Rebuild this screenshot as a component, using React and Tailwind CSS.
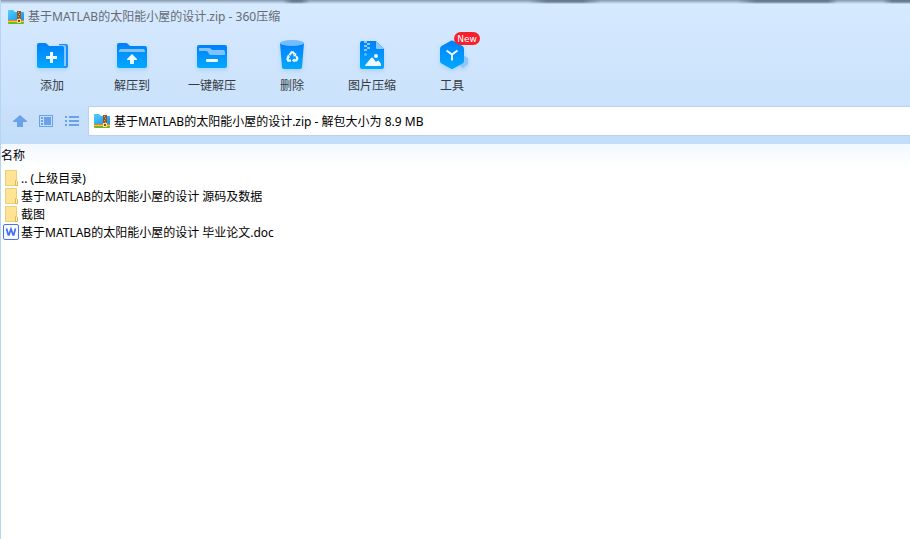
import React from "react";

function ArchiveIcon() {
  return (
    <svg width="16" height="14" viewBox="0 0 16 14" className="shrink-0" aria-hidden="true">
      <path d="M0 1q0-1 1-1h4l2 2h8q1 0 1 1v8H0z" fill="url(#folderBlue)" />
      <path d="M0 10h16v1H0z" fill="#f47a23" />
      <path d="M0 11h16v1H0z" fill="#ffc533" />
      <path d="M0 12h16v1q0 1-1 1H1q-1 0-1-1z" fill="#69b82d" />
      <path d="M9 1h4v12H9z" fill="#9a5420" />
      <path d="M10 2h1v1h-1zM11 4h1v1h-1zM10 6h1v1h-1zM11 8h1v1h-1z" fill="#e0a860" />
      <path d="M9 9h4v4H9z" fill="#ffe28a" />
      <path d="M10 10h2v2h-2z" fill="#8b4a1c" />
    </svg>
  );
}

function Defs() {
  return (
    <svg width="0" height="0" className="absolute" aria-hidden="true">
      <defs>
        <linearGradient id="blue" x1="0" y1="0" x2="0" y2="1">
          <stop offset="0" stopColor="#0080fb" />
          <stop offset="1" stopColor="#00a9ff" />
        </linearGradient>
        <linearGradient id="folderBlue" x1="0" y1="0" x2="1" y2="1">
          <stop offset="0" stopColor="#4fd0fb" />
          <stop offset="1" stopColor="#1791ea" />
        </linearGradient>
      </defs>
    </svg>
  );
}

function ToolIcon({ children }) {
  return (
    <svg width="34" height="34" viewBox="0 0 34 34" className="drop-shadow-[0_2px_2px_rgba(40,130,230,0.2)]" aria-hidden="true">
      {children}
    </svg>
  );
}

const addIcon = (
  <ToolIcon>
    <path d="M24 5h7q2 0 2 2v20q0 2-2 2h-7z" fill="#168fff" />
    <path d="M24 6h5q2 0 2 2v19h-2V9q0-1-1-1h-4z" fill="#8bc7ff" />
    <path d="M2 6q0-2 2-2h6q1 0 2 1l2 2h13q2 0 2 2v20H4q-2 0-2-2z" fill="url(#blue)" />
    <path d="M15 13h3v4h4v3h-4v4h-3v-4h-4v-3h4z" fill="#eef8ff" />
  </ToolIcon>
);

const extractIcon = (
  <ToolIcon>
    <path d="M2 6q0-2 2-2h7q1 0 2 1l2 2h15q2 0 2 2v18q0 2-2 2H4q-2 0-2-2z" fill="url(#blue)" />
    <path d="M4 12q0-2 2-2h22q2 0 2 2v1H4z" fill="#82c2ff" />
    <path d="M17 15l5 5v1h-3v4h-4v-4h-3v-1z" fill="#eef8ff" />
  </ToolIcon>
);

const quickIcon = (
  <ToolIcon>
    <rect x="2" y="6" width="30" height="23" rx="2" fill="url(#blue)" />
    <path d="M4 9h10q1 0 2 1l1 1h11q2 0 2 2v3H16q-1 0-2-1l-1-2q-1-1-2-1H4z" fill="#82c2ff" />
    <rect x="11" y="20" width="12" height="3" rx="1" fill="#f3faff" />
  </ToolIcon>
);

const deleteIcon = (
  <ToolIcon>
    <path d="M5 4h24l-2 24q0 2-3 2H10q-3 0-3-2z" fill="url(#blue)" />
    <ellipse cx="17" cy="4" rx="12" ry="3" fill="#74bcff" />
    <g transform="translate(17 18) scale(.78) translate(-16.6 -18.5)">
      <g fill="none" stroke="#eef8ff" strokeWidth="2.8">
        <path d="M13.4 16l2.6-3.600h2l1.800 2.600M22.100 17.400l1.400 3-1.200 2.400h-4M15.300 23.100h-3.600l-1-2.200 1.600-3" />
      </g>
      <path d="M22 13v4.500h-4.500zM19.700 20v5.500L16.400 22.700zM9.400 17.600l3.200-2 1.700 3.800z" fill="#eef8ff" />
    </g>
  </ToolIcon>
);

const imageIcon = (
  <ToolIcon>
    <path d="M5 4q0-2 2-2h14l8 8v18q0 2-2 2H7q-2 0-2-2z" fill="url(#blue)" />
    <path d="M21 2l8 8h-7q-1 0-1-1z" fill="#8bc7ff" />
    <path d="M9 2h3v2h3v2h-3v2h3v2h-3v2H9v-2h3V8H9V6h3V4H9z" fill="#8bcaff" />
    <circle cx="10.5" cy="15.5" r="1.5" fill="#65b7ff" />
    <circle cx="21" cy="17" r="2" fill="#eef8ff" />
    <path d="M10 27q0-1 1-2l5-6q1-1 2 0l3 4 1-1q1-1 2 0l2 3v2z" fill="#eef8ff" />
  </ToolIcon>
);

const toolsIcon = (
  <ToolIcon>
    <path d="M24 19l4-3 5 3v6l-5 4-5-4z" fill="#8fc6fa" />
    <path d="M15.5 2q1.500-1 3 0l9 5q1.500 1 1.500 3v12q0 1.500-1.500 2.500l-9 5q-1.500 1-3 0l-9-5Q5 23.500 5 22V10q0-2 1.500-3z" fill="url(#blue)" />
    <path d="M11.500 11.500l5.500 4 5.500-4M17 15.500v6" fill="none" stroke="#eef8ff" strokeWidth="2" />
  </ToolIcon>
);

const tools = [
  { label: "添加", icon: addIcon },
  { label: "解压到", icon: extractIcon },
  { label: "一键解压", icon: quickIcon },
  { label: "删除", icon: deleteIcon },
  { label: "图片压缩", icon: imageIcon },
  { label: "工具", icon: toolsIcon, badge: "New" },
];

function FolderIcon() {
  return (
    <svg width="16" height="16" viewBox="0 0 16 16" className="shrink-0" aria-hidden="true">
      <path d="M2.500 .5h11v10l1 1v4h-12z" fill="#ffe495" stroke="#edcf76" />
      <path d="M12.500 10.500h1l1 1v4h-2z" fill="#fff0b8" stroke="#e3b94c" />
    </svg>
  );
}

function WordIcon() {
  return (
    <svg width="16" height="16" viewBox="0 0 16 16" className="shrink-0" aria-hidden="true">
      <rect x=".5" y=".5" width="15" height="15" rx="1.500" fill="#f7faff" stroke="#4a74e8" />
      <path d="M3.500 4.500l1.800 6.500h.6L8 5l2.100 6h.6l1.800-6.500" fill="none" stroke="#3f6ff0" strokeWidth="1.700" />
    </svg>
  );
}

const files = [
  { name: ".. (上级目录)", icon: <FolderIcon /> },
  { name: "基于MATLAB的太阳能小屋的设计 源码及数据", icon: <FolderIcon /> },
  { name: "截图", icon: <FolderIcon /> },
  { name: "基于MATLAB的太阳能小屋的设计 毕业论文.doc", icon: <WordIcon /> },
];

export default function App() {
  return (
    <div className="flex min-h-screen flex-col border-l border-[#b5d5f5] bg-white font-['Noto_Sans','Noto_Sans_CJK_SC',sans-serif] text-xs text-black">
      <Defs />
      <header className="bg-linear-to-b from-[#d6eaff] to-[#c6dffa]">
        <div className="h-1 bg-linear-to-b from-[#8499ae] to-[#d6eaff]">
          <div className="h-full bg-[linear-gradient(90deg,transparent_31%,#66788b_32%,#66788b_33%,transparent_34%,transparent_58%,#66788b_60%,#66788b_64%,transparent_66%,transparent_81%,#66788b_83%,#66788b_91%,transparent_92%,transparent_97%,#66788b_98%)] mask-b-from-30%" />
        </div>
        <h1 className="flex h-[26px] items-center gap-1 pl-[7px] font-normal text-[#666b73]">
          <ArchiveIcon />
          <span>基于MATLAB的太阳能小屋的设计.zip - 360压缩</span>
        </h1>
        <nav className="flex h-[77px] pl-[11px] pt-[9px]">
          {tools.map((tool) => (
            <button key={tool.label} type="button" className="relative flex h-[60px] w-20 flex-col items-center gap-[5px] text-[#353b43]">
              {tool.icon}
              <span className="leading-4">{tool.label}</span>
              {tool.badge && (
                <span className="absolute -top-[7px] left-[42px] flex h-[13px] w-[26px] items-center justify-center rounded-full bg-[#f9202d] font-['DejaVu_Sans'] text-[9px] text-white">
                  {tool.badge}
                </span>
              )}
            </button>
          ))}
        </nav>
        <div className="flex h-[37px] items-start bg-linear-to-b from-[#c9e0fa] to-[#c3def9]">
          <div className="flex h-7 shrink-0 items-center gap-3 pl-3 pr-[10px]">
            <button type="button" aria-label="向上">
              <svg width="14" height="14" viewBox="0 0 14 14" fill="#69a1ec"><path d="M7 1l7 6v1h-4v5H4V8H0V7z" /></svg>
            </button>
            <button type="button" aria-label="预览">
              <svg width="14" height="14" viewBox="0 0 14 14" fill="#69a1ec"><path fillRule="evenodd" d="M0 1h14v12H0zM1 2v10h12V2z" /><path d="M2 3h2v2H2zM2 6h2v2H2zM2 9h2v2H2zM5 3h7v8H5z" /></svg>
            </button>
            <button type="button" aria-label="列表">
              <svg width="14" height="14" viewBox="0 0 14 14" fill="#69a1ec"><path d="M0 2h2v2H0zM4 2h10v2H4zM0 6h2v2H0zM4 6h10v2H4zM0 10h2v2H0zM4 10h10v2H4z" /></svg>
            </button>
          </div>
          <label className="flex h-7 flex-1 items-center gap-1 bg-white pl-[5px] outline outline-[#b7d3f0]">
            <ArchiveIcon />
            <input readOnly aria-label="地址" value="基于MATLAB的太阳能小屋的设计.zip - 解包大小为 8.9 MB" className="min-w-0 flex-1 bg-transparent pt-0.5 outline-none" />
          </label>
        </div>
      </header>
      <table className="w-full border-collapse text-left">
        <thead>
          <tr className="h-[25px] bg-linear-to-b from-[#f2f8fe] to-white">
            <th scope="col" className="p-0 pb-0.5 font-normal">名称</th>
          </tr>
        </thead>
        <tbody>
          {files.map((file) => (
            <tr key={file.name}>
              <td className="p-0">
                <div className="flex h-[18px] items-center gap-[2px] pl-[2px]">
                  {file.icon}
                  <span className="whitespace-nowrap pt-0.5">{file.name}</span>
                </div>
              </td>
            </tr>
          ))}
        </tbody>
      </table>
    </div>
  );
}
